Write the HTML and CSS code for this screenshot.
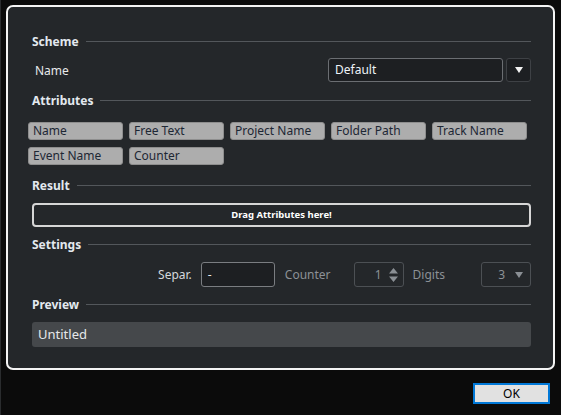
FILE: index.html
```html
<!DOCTYPE html>
<html lang="en">

<head>
    <meta charset="UTF-8">
    <title>Naming Scheme</title>
    <link rel="stylesheet" href="styles.css">
</head>

<body>
    <div class="dialog">
        <!-- Scheme -->
        <div class="section-title"><span>Scheme</span></div>
        <div class="scheme-row">
            <label class="name-label">Name</label>
            <div class="scheme-select">Default</div>
            <div class="scheme-btn">
                <svg width="10" height="8" viewBox="0 0 10 8"><path d="M1 1 L9 1 L5 7 Z" fill="#f2f2f2"/></svg>
            </div>
        </div>

        <!-- Attributes -->
        <div class="section-title"><span>Attributes</span></div>
        <div class="chips">
            <div class="chip">Name</div>
            <div class="chip">Free Text</div>
            <div class="chip">Project Name</div>
            <div class="chip">Folder Path</div>
            <div class="chip">Track Name</div>
            <div class="chip">Event Name</div>
            <div class="chip">Counter</div>
        </div>

        <!-- Result -->
        <div class="section-title"><span>Result</span></div>
        <div class="drop-zone">Drag Attributes here!</div>

        <!-- Settings -->
        <div class="section-title"><span>Settings</span></div>
        <div class="settings-row">
            <span class="set-label">Separ.</span>
            <div class="sep-input">-</div>
            <span class="set-label disabled counter-label">Counter</span>
            <div class="spin">
                <span>1</span>
                <svg width="11" height="16" viewBox="0 0 11 16"><path d="M5.5 1 L10 6.5 L1 6.5 Z M1 9.5 L10 9.5 L5.5 15 Z" fill="#8a8f94"/></svg>
            </div>
            <span class="set-label disabled digits-label">Digits</span>
            <div class="digits">
                <span>3</span>
                <svg width="10" height="8" viewBox="0 0 10 8"><path d="M1 1 L9 1 L5 7 Z" fill="#8a8f94"/></svg>
            </div>
        </div>

        <!-- Preview -->
        <div class="section-title"><span>Preview</span></div>
        <div class="preview">Untitled</div>
    </div>

    <div class="footer">
        <button class="ok-btn">OK</button>
    </div>
    <div class="behind-text">Drop Audio Samples or MIDI Part here.</div>
</body>

</html>
```

FILE: styles.css
```css
body {
    margin: 0;
    background-color: #0b0b0b;
    font-family: "Noto Sans", "Open Sans", sans-serif;
    height: 415px;
    overflow: hidden;
    border-left: 1px solid #2a2c2e;
}

.dialog {
    box-sizing: border-box;
    width: 549px;
    height: 365px;
    margin: 5px 0 0 5px;
    padding: 25px 22px 0 24px;
    background-color: #24272a;
    border: 2px solid #f4f4f4;
    border-radius: 7px;
    display: flex;
    flex-direction: column;
}

.section-title {
    display: flex;
    align-items: center;
    height: 18px;
    font-size: 12px;
    font-weight: bold;
    color: #e3e9ef;
    margin-top: 9px;
}

.section-title:first-child {
    margin-top: 0;
}

.section-title::after {
    content: "";
    flex: 1;
    height: 1px;
    margin-left: 7px;
    background-color: #53575b;
}

.scheme-row {
    display: flex;
    align-items: center;
    height: 24px;
    margin-top: 8px;
}

.name-label {
    flex: 1;
    padding-left: 3px;
    font-size: 12px;
    color: #e8eaec;
}

.scheme-select {
    box-sizing: border-box;
    width: 175px;
    height: 24px;
    padding: 0 6px;
    line-height: 22px;
    font-size: 12px;
    color: #eef3f8;
    background-color: #1d1f22;
    border: 1px solid #6b6e72;
    border-radius: 3px;
}

.scheme-btn {
    box-sizing: border-box;
    width: 25px;
    height: 24px;
    margin-left: 3px;
    display: flex;
    align-items: center;
    justify-content: center;
    background-color: #1d1f22;
    border: 1px solid #3e4145;
    border-radius: 3px;
}

.chips {
    display: grid;
    grid-template-columns: repeat(5, 95px);
    column-gap: 6px;
    row-gap: 7px;
    margin: 13px 0 0 -4px;
}

.chip {
    box-sizing: border-box;
    height: 18px;
    padding-left: 4px;
    line-height: 16px;
    font-size: 12px;
    color: #1d2734;
    background-color: #adadad;
    border: 1px solid #8e8e8e;
    border-radius: 3px;
}

.chips + .section-title {
    margin-top: 11px;
}

.drop-zone {
    box-sizing: border-box;
    height: 24px;
    margin-top: 9px;
    line-height: 20px;
    text-align: center;
    font-size: 9.5px;
    font-weight: bold;
    color: #ffffff;
    border: 2px solid #d6d6d6;
    border-radius: 4px;
}

.drop-zone + .section-title {
    margin-top: 8px;
}

.settings-row {
    display: flex;
    align-items: center;
    justify-content: flex-end;
    height: 25px;
    margin-top: 9px;
}

.settings-row + .section-title {
    margin-top: 8px;
}

.set-label {
    font-size: 12px;
    color: #d4d8dc;
}

.set-label.disabled {
    color: #8c9196;
}

.sep-input {
    box-sizing: border-box;
    width: 74px;
    height: 25px;
    margin: 0 10px 0 9px;
    padding-left: 6px;
    line-height: 23px;
    font-size: 12px;
    color: #e8eaec;
    background-color: #1d1f22;
    border: 1px solid #7a7d81;
    border-radius: 3px;
}

.spin,
.digits {
    box-sizing: border-box;
    width: 50px;
    height: 25px;
    display: flex;
    align-items: center;
    justify-content: flex-end;
    gap: 6px;
    padding-right: 4px;
    font-size: 12px;
    color: #8c9196;
    border: 1px solid #4c5054;
    border-radius: 3px;
}

.spin {
    margin-left: 23px;
}

.digits {
    margin-left: 36px;
    padding-right: 6px;
    gap: 9px;
}

.digits-label {
    margin-left: 9px;
}

.preview {
    box-sizing: border-box;
    height: 25px;
    margin-top: 9px;
    padding-left: 6px;
    line-height: 25px;
    font-size: 13px;
    color: #e6e8ea;
    background-color: #45484b;
    border-radius: 3px;
}

.footer {
    display: flex;
    justify-content: flex-end;
    margin: 13px 11px 0 0;
}

.ok-btn {
    box-sizing: border-box;
    width: 77px;
    height: 21px;
    padding: 0;
    font-family: "Noto Sans", sans-serif;
    font-size: 12px;
    color: #000;
    background-color: #e1e1e1;
    border: 2px solid #0078d7;
}

.behind-text {
    margin: 7px 0 0 300px;
    font-size: 13px;
    color: #6a6a6a;
}
```
